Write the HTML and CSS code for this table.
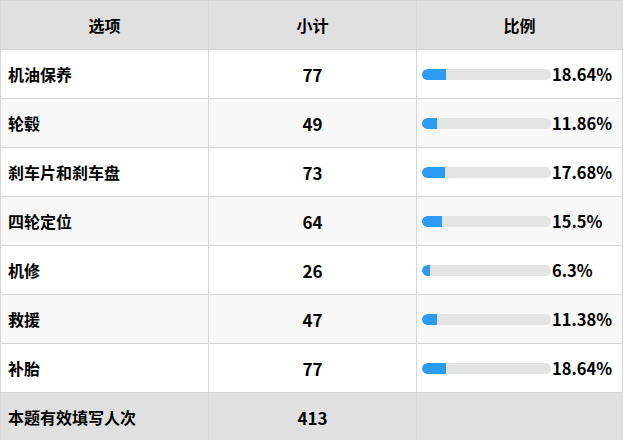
FILE: index.html
```html
<!DOCTYPE html>
<html lang="zh">
<head>
<meta charset="utf-8">
<link rel="stylesheet" href="styles.css">
</head>
<body>
<table class="tbl">
  <thead>
    <tr><th>选项</th><th>小计</th><th>比例</th></tr>
  </thead>
  <tbody>
    <tr><td class="opt">机油保养</td><td class="num">77</td><td class="pct"><div class="pc"><div class="bar"><div class="fill" style="width:18.64%"></div></div><span>18.64%</span></div></td></tr>
    <tr class="alt"><td class="opt">轮毂</td><td class="num">49</td><td class="pct"><div class="pc"><div class="bar"><div class="fill" style="width:11.86%"></div></div><span>11.86%</span></div></td></tr>
    <tr><td class="opt">刹车片和刹车盘</td><td class="num">73</td><td class="pct"><div class="pc"><div class="bar"><div class="fill" style="width:17.68%"></div></div><span>17.68%</span></div></td></tr>
    <tr class="alt"><td class="opt">四轮定位</td><td class="num">64</td><td class="pct"><div class="pc"><div class="bar"><div class="fill" style="width:15.5%"></div></div><span>15.5%</span></div></td></tr>
    <tr><td class="opt">机修</td><td class="num">26</td><td class="pct"><div class="pc"><div class="bar"><div class="fill" style="width:6.3%"></div></div><span>6.3%</span></div></td></tr>
    <tr class="alt"><td class="opt">救援</td><td class="num">47</td><td class="pct"><div class="pc"><div class="bar"><div class="fill" style="width:11.38%"></div></div><span>11.38%</span></div></td></tr>
    <tr><td class="opt">补胎</td><td class="num">77</td><td class="pct"><div class="pc"><div class="bar"><div class="fill" style="width:18.64%"></div></div><span>18.64%</span></div></td></tr>
  </tbody>
  <tfoot>
    <tr><td class="opt">本题有效填写人次</td><td class="num">413</td><td></td></tr>
  </tfoot>
</table>
</body>
</html>
```
FILE: styles.css
```css
html, body {
  margin: 0;
  padding: 0;
  background: #ffffff;
}
body {
  font-family: "Noto Sans CJK SC", "Noto Sans", sans-serif;
  color: #000;
}
.tbl {
  width: 623px;
  border-collapse: collapse;
  table-layout: fixed;
  font-size: 16px;
  font-weight: bold;
}
.tbl th, .tbl td {
  height: 48px;
  border: 1px solid #d6d6d6;
  padding: 0;
}
.tbl th {
  background: #e0e0e0;
  text-align: center;
  font-weight: bold;
}
.tbl th:nth-child(1), .tbl td:nth-child(1) { width: 207px; }
.tbl th:nth-child(2), .tbl td:nth-child(2) { width: 207px; }
.tbl .opt {
  padding-left: 7px;
  font-size: 16px;
}
.tbl .num {
  text-align: center;
  font-size: 17px;
}
.tbl tr.alt td { background: #f8f8f8; }
.tbl tfoot td { background: #e0e0e0; }
.pc {
  display: flex;
  align-items: center;
  padding-left: 5px;
}
.bar {
  width: 129px;
  height: 11px;
  border-radius: 6px;
  background: #e4e4e4;
  overflow: hidden;
  flex: none;
}
.fill {
  height: 100%;
  background: #2b9cf2;
  border-radius: 6px 0 0 6px;
}
.pc span {
  font-size: 16.5px;
  margin-left: 1px;
}
```
